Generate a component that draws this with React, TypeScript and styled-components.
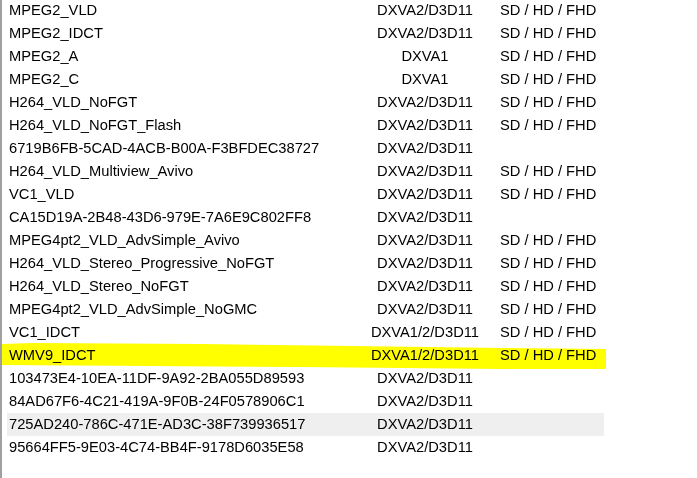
import React from "react";
import styled, { createGlobalStyle } from "styled-components";

const Global = createGlobalStyle`
  html, body { margin: 0; padding: 0; background: #ffffff; }
  body { font-family: "Liberation Sans", Arial, sans-serif; }
`;

type Item = { name: string; api: string; res?: boolean; hover?: boolean; marked?: boolean };

const items: Item[] = [
  { name: "MPEG2_VLD", api: "DXVA2/D3D11", res: true },
  { name: "MPEG2_IDCT", api: "DXVA2/D3D11", res: true },
  { name: "MPEG2_A", api: "DXVA1", res: true },
  { name: "MPEG2_C", api: "DXVA1", res: true },
  { name: "H264_VLD_NoFGT", api: "DXVA2/D3D11", res: true },
  { name: "H264_VLD_NoFGT_Flash", api: "DXVA2/D3D11", res: true },
  { name: "6719B6FB-5CAD-4ACB-B00A-F3BFDEC38727", api: "DXVA2/D3D11" },
  { name: "H264_VLD_Multiview_Avivo", api: "DXVA2/D3D11", res: true },
  { name: "VC1_VLD", api: "DXVA2/D3D11", res: true },
  { name: "CA15D19A-2B48-43D6-979E-7A6E9C802FF8", api: "DXVA2/D3D11" },
  { name: "MPEG4pt2_VLD_AdvSimple_Avivo", api: "DXVA2/D3D11", res: true },
  { name: "H264_VLD_Stereo_Progressive_NoFGT", api: "DXVA2/D3D11", res: true },
  { name: "H264_VLD_Stereo_NoFGT", api: "DXVA2/D3D11", res: true },
  { name: "MPEG4pt2_VLD_AdvSimple_NoGMC", api: "DXVA2/D3D11", res: true },
  { name: "VC1_IDCT", api: "DXVA1/2/D3D11", res: true },
  { name: "WMV9_IDCT", api: "DXVA1/2/D3D11", res: true, marked: true },
  { name: "103473E4-10EA-11DF-9A92-2BA055D89593", api: "DXVA2/D3D11" },
  { name: "84AD67F6-4C21-419A-9F0B-24F0578906C1", api: "DXVA2/D3D11" },
  { name: "725AD240-786C-471E-AD3C-38F739936517", api: "DXVA2/D3D11", hover: true },
  { name: "95664FF5-9E03-4C74-BB4F-9178D6035E58", api: "DXVA2/D3D11" },
];

const Frame = styled.div`
  position: relative;
  width: 697px;
  height: 478px;
  overflow: hidden;
  border-left: 2px solid #a0a0a0;
  box-sizing: border-box;
  background: #ffffff;
`;

const List = styled.div`
  display: flex;
  flex-direction: column;
  padding-left: 5px;
  margin-top: -1px;
`;

const Row = styled.div<{ $hover?: boolean }>`
  display: grid;
  grid-template-columns: 353px 130px 114px;
  width: 597px;
  height: 23px;
  line-height: 23px;
  font-size: 14.7px;
  color: #000000;
  white-space: nowrap;
  background: ${(p) => (p.$hover ? "#efefef" : "transparent")};
`;

const NameCell = styled.div`
  padding-left: 2px;
`;

const ApiCell = styled.div`
  text-align: center;
`;

const ResCell = styled.div`
  padding-left: 10px;
`;

const Marker = styled.svg`
  position: absolute;
  left: 0;
  top: 0;
  width: 697px;
  height: 478px;
  pointer-events: none;
  mix-blend-mode: multiply;
`;

export default function App() {
  return (
    <>
      <Global />
      <Frame>
        <List>
          {items.map((it) => (
            <Row key={it.name} $hover={it.hover}>
              <NameCell>{it.name}</NameCell>
              <ApiCell>{it.api}</ApiCell>
              <ResCell>{it.res ? "SD / HD / FHD" : ""}</ResCell>
            </Row>
          ))}
        </List>
        <Marker viewBox="0 0 697 478">
          <path
            d="M0 344 L30 343 L200 344 L350 346 L500 348 L604 349 L604 369 L500 369 L400 368 L300 367 L150 366 L0 365 Z"
            fill="#ffff00"
          />
        </Marker>
      </Frame>
    </>
  );
}
